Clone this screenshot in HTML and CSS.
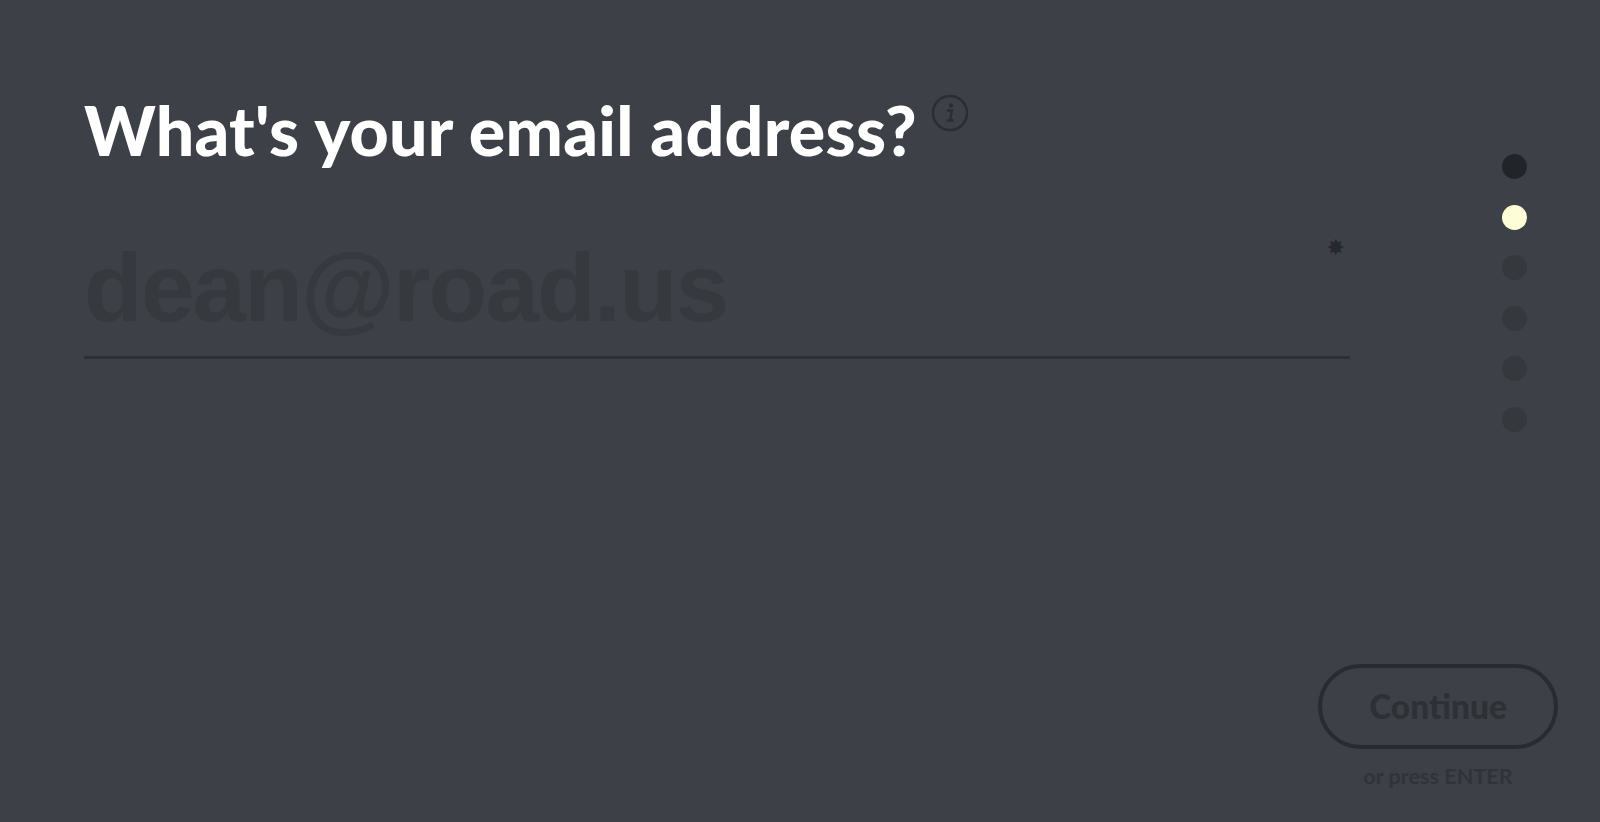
FILE: index.html
```html
<!DOCTYPE html>
<html lang="en">
<head>
  <meta charset="UTF-8">
  <meta name="viewport" content="width=device-width, initial-scale=1.0">
  <title>Email address</title>
  <link rel="stylesheet" href="styles.css">
</head>
<body>
  <div class="page">
    <main class="form">
      <div class="question">
        <h1>What's your email address?</h1>
        <svg class="info" viewBox="0 0 38 38" width="38" height="38" aria-hidden="true">
          <circle cx="19" cy="19" r="17" fill="none" stroke="#2a2d32" stroke-width="2.5"/>
          <circle cx="20" cy="11.5" r="2.2" fill="#2a2d32"/>
          <path d="M16 16.5h5l-2 9.5h2.5M15.5 26.5h7" fill="none" stroke="#2a2d32" stroke-width="2.4"/>
        </svg>
      </div>
      <div class="field">
        <div class="placeholder">dean@road.us</div>
        <span class="required">✸</span>
      </div>
    </main>
    <aside class="side">
      <div class="steps">
        <span class="dot done"></span>
        <span class="dot current"></span>
        <span class="dot"></span>
        <span class="dot"></span>
        <span class="dot"></span>
        <span class="dot"></span>
      </div>
      <div class="actions">
        <button class="continue">Continue</button>
        <div class="hint">or press ENTER</div>
      </div>
    </aside>
  </div>
</body>
</html>
```

FILE: styles.css
```css
body {
  margin: 0;
  background-color: #3d4047;
  font-family: "Lato", "Liberation Sans", sans-serif;
}
.page {
  display: flex;
  height: 822px;
  overflow: hidden;
}
.form {
  flex: 0 0 1266px;
  margin: 0 -32px 0 84px;
}
.question {
  display: flex;
  align-items: flex-start;
  padding-top: 94px;
}
h1 {
  margin: 0;
  font-size: 68px;
  line-height: 72px;
  font-weight: 900;
  letter-spacing: 0.3px;
  color: #fff;
}
.info {
  margin: 0 0 0 14px;
}
.field {
  position: relative;
  margin-top: 68px;
  height: 122px;
  border-bottom: 3px solid #2c2f35;
}
.placeholder {
  font-family: "Liberation Sans", sans-serif;
  font-size: 96px;
  line-height: 108px;
  font-weight: 700;
  letter-spacing: -1.75px;
  color: #363a3f;
}
.required {
  position: absolute;
  right: 5px;
  top: 1px;
  font-family: "DejaVu Sans", sans-serif;
  font-size: 22px;
  color: #25282c;
}
.side {
  flex: 0 0 282px;
  display: flex;
  flex-direction: column;
  align-items: flex-end;
  padding: 154px 42px 0 0;
  box-sizing: border-box;
}
.steps {
  display: flex;
  flex-direction: column;
  gap: 25.5px;
  margin-right: 31px;
}
.dot {
  width: 25px;
  height: 25px;
  border-radius: 50%;
  background-color: #35383d;
}
.dot.done {
  background-color: #212429;
}
.dot.current {
  background-color: #fdfdd8;
}
.actions {
  margin-top: 232px;
  display: flex;
  flex-direction: column;
  align-items: center;
}
.continue {
  width: 240px;
  height: 85px;
  box-sizing: border-box;
  border: 4px solid #282b30;
  border-radius: 43px;
  background: none;
  font-family: "Lato", sans-serif;
  font-size: 33.5px;
  font-weight: 900;
  color: #2d3035;
}
.hint {
  margin-top: 14px;
  font-size: 21.6px;
  font-weight: 700;
  color: #303338;
}
```
